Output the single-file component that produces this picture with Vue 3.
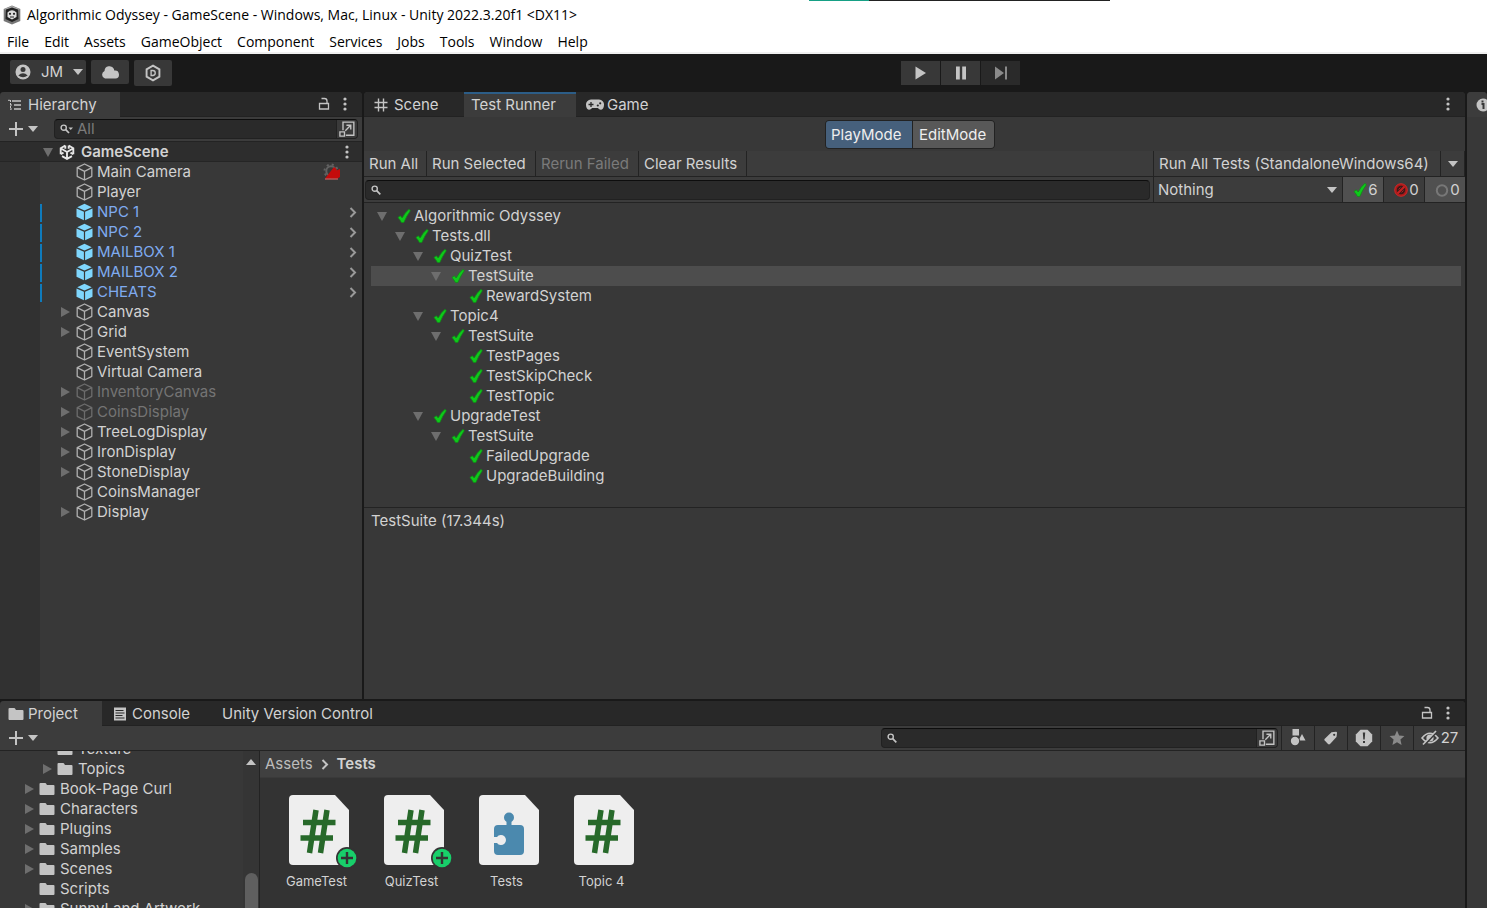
<script setup>
import { ref } from 'vue'

const menus = ['File', 'Edit', 'Assets', 'GameObject', 'Component', 'Services', 'Jobs', 'Tools', 'Window', 'Help']

const objects = [
  { name: 'Main Camera', camera: true },
  { name: 'Player' },
  { name: 'NPC 1', prefab: true },
  { name: 'NPC 2', prefab: true },
  { name: 'MAILBOX 1', prefab: true },
  { name: 'MAILBOX 2', prefab: true },
  { name: 'CHEATS', prefab: true },
  { name: 'Canvas', fold: true },
  { name: 'Grid', fold: true },
  { name: 'EventSystem' },
  { name: 'Virtual Camera' },
  { name: 'InventoryCanvas', fold: true, off: true },
  { name: 'CoinsDisplay', fold: true, off: true },
  { name: 'TreeLogDisplay', fold: true },
  { name: 'IronDisplay', fold: true },
  { name: 'StoneDisplay', fold: true },
  { name: 'CoinsManager' },
  { name: 'Display', fold: true },
]

const tests = [
  { name: 'Algorithmic Odyssey', depth: 0, fold: true },
  { name: 'Tests.dll', depth: 1, fold: true },
  { name: 'QuizTest', depth: 2, fold: true },
  { name: 'TestSuite', depth: 3, fold: true },
  { name: 'RewardSystem', depth: 4 },
  { name: 'Topic4', depth: 2, fold: true },
  { name: 'TestSuite', depth: 3, fold: true },
  { name: 'TestPages', depth: 4 },
  { name: 'TestSkipCheck', depth: 4 },
  { name: 'TestTopic', depth: 4 },
  { name: 'UpgradeTest', depth: 2, fold: true },
  { name: 'TestSuite', depth: 3, fold: true },
  { name: 'FailedUpgrade', depth: 4 },
  { name: 'UpgradeBuilding', depth: 4 },
]
const selected = ref(3)

const folders = [
  { name: 'Texture', depth: 1 },
  { name: 'Topics', depth: 1, fold: true },
  { name: 'Book-Page Curl', depth: 0, fold: true },
  { name: 'Characters', depth: 0, fold: true },
  { name: 'Plugins', depth: 0, fold: true },
  { name: 'Samples', depth: 0, fold: true },
  { name: 'Scenes', depth: 0, fold: true },
  { name: 'Scripts', depth: 0 },
  { name: 'SunnyLand Artwork', depth: 0, fold: true },
]

const assets = [
  { name: 'GameTest', icon: 'script', added: true },
  { name: 'QuizTest', icon: 'script', added: true },
  { name: 'Tests', icon: 'assembly' },
  { name: 'Topic 4', icon: 'script' },
]

const indent = (depth, step) => ({ paddingLeft: depth * step + 'px' })
</script>

<template>
  <svg class="defs" aria-hidden="true">
    <symbol id="i-down" viewBox="0 0 10 6"><path d="M0 0h10L5 6z" fill="currentColor" /></symbol>
    <symbol id="i-fold" viewBox="0 0 10 10"><path d="M1 0l9 5-9 5z" fill="currentColor" /></symbol>
    <symbol id="i-open" viewBox="0 0 10 10"><path d="M0 1h10L5 10z" fill="currentColor" /></symbol>
    <symbol id="i-next" viewBox="0 0 8 12"><path d="M1.5 2L6 6.500l-4.500 4.500" fill="none" stroke="currentColor" stroke-width="2" /></symbol>
    <symbol id="i-dots" viewBox="0 0 4 14"><g fill="currentColor"><circle cx="2" cy="2" r="1.600" /><circle cx="2" cy="7" r="1.600" /><circle cx="2" cy="12" r="1.600" /></g></symbol>
    <symbol id="i-lock" viewBox="0 0 12 14"><path d="M1.500 6.500h9V12h-9zM3.500 1.500h3Q9 1.500 9 4v2.500" fill="none" stroke="currentColor" stroke-width="1.300" /></symbol>
    <symbol id="i-plus" viewBox="0 0 16 16"><path d="M8 1v14M1 8h14" fill="none" stroke="currentColor" stroke-width="2" /></symbol>
    <symbol id="i-search" viewBox="0 0 10 10"><circle cx="3.700" cy="3.700" r="2.600" fill="none" stroke="currentColor" stroke-width="1.400" /><path d="M5.700 5.700L9.300 9.300" stroke="currentColor" stroke-width="1.700" /></symbol>
    <symbol id="i-searchmenu" viewBox="0 0 14 10"><circle cx="3.700" cy="3.700" r="2.600" fill="none" stroke="currentColor" stroke-width="1.400" /><path d="M5.700 5.700L9 9" stroke="currentColor" stroke-width="1.700" /><path d="M8.500 3.500h4.500L10.700 6z" fill="currentColor" /></symbol>
    <symbol id="i-popout" viewBox="0 0 14 14"><path d="M3.500 8V1h9.500v11.500H6M.800 9.500h4v3.700h-4zM5.500 8.500L10 4M6.500 3.700h3.800v3.800" fill="none" stroke="currentColor" stroke-width="1.200" /></symbol>
    <symbol id="i-cube" viewBox="0 0 18 18"><path d="M9.500 1l7.300 3.700v8.600L9.500 17l-7.300-3.700V4.700zM2.200 4.700l7.300 3.600 7.300-3.600M9.500 8.300V17" fill="none" stroke="currentColor" stroke-width="1.300" stroke-linejoin="round" /></symbol>
    <symbol id="i-prefab" viewBox="0 0 18 18"><path d="M9.500.700l7.300 3.500-7.300 3.300-7.300-3.300z" fill="#7fd6fd" /><path d="M1.500 5.400l7.400 3.300v8.600l-7.400-3.500zM17.500 5.400l-7.400 3.300v8.600l7.400-3.500z" fill="#7fd6fd" /></symbol>
    <symbol id="i-unity" viewBox="0 0 16 16"><path d="M8 8v6.500M8 8L2.500 4.800M8 8l5.500-3.200M6.300 1.500L1.700 4.200v6M9.700 1.500l4.600 2.700v6M3 12.200l5 2.700 5-2.700M6.300 1.500v3.200M9.700 1.500v3.200M1.700 10.200l2.800-1.600M14.300 10.200l-2.800-1.600" fill="none" stroke="currentColor" stroke-width="1.900" /></symbol>
    <symbol id="i-appicon" viewBox="0 0 18 20"><path d="M9 .500l8.300 3.500v12L9 19.500.700 16V4z" fill="#777" /><path d="M9 1l8 3.300L9 6 1 4.300z" fill="#aaa" /><path d="M3 4.500l6-2 6 2 .500 9.500L9 17l-6.500-3z" fill="#222" /><path d="M4.500 7.500Q9 3 13.500 7.500V12L9 14.500 4.500 12z" fill="#ddd" /><circle cx="7" cy="8.800" r="1.100" fill="#222" /><circle cx="11" cy="8.800" r="1.100" fill="#222" /><path d="M7 12h4" stroke="#444" stroke-width="1.200" /></symbol>
    <symbol id="i-tree" viewBox="0 0 14 12"><path d="M4 2h9M6 6h7M6 10h7" stroke="currentColor" stroke-width="1.300" /><path d="M0 1.300h2.500M2.500 1v9.500M2 6h2M2 10h2" fill="none" stroke="currentColor" stroke-width="1" stroke-dasharray="2 1" /></symbol>
    <symbol id="i-grid" viewBox="0 0 14 14"><path d="M4.500.500v13M9.500.500v13M.500 4.500h13M.500 9.500h13" stroke="currentColor" stroke-width="1.400" /></symbol>
    <symbol id="i-game" viewBox="0 0 18 11"><path d="M5 0h8a5 5 0 0 1 5 5.500c0 5-4 6-6 3H6C4 11.500 0 10.500 0 5.500A5 5 0 0 1 5 0z" fill="currentColor" /><path d="M2.500 5h5M5 2.500v5" stroke="#282828" stroke-width="1.300" /><circle cx="11.800" cy="6" r="1.100" fill="#282828" /><circle cx="14.200" cy="3.800" r="1.100" fill="#282828" /></symbol>
    <symbol id="i-folder" viewBox="0 0 16 13"><path d="M.500 1.500Q.500.500 1.500.500H6q1 0 1.400 1l.500 1H14.500q1 0 1 1V11.500q0 1-1 1h-13q-1 0-1-1z" fill="currentColor" /></symbol>
    <symbol id="i-console" viewBox="0 0 12 14"><path d="M0 .500h12v13H0z" fill="currentColor" /><path d="M1.500 3.500h8M1.500 6h9M1.500 8.500h7M1.500 11h9" stroke="#282828" stroke-width="1.200" /></symbol>
    <symbol id="i-check" viewBox="0 0 14 14"><path d="M1 8.500L3.300 6.800l1.900 2.200Q8 3.500 12 .300L13.300 1.800Q9.500 7 6.800 13.500H4.500Q2.800 10.500 1 8.500z" fill="#0ec91a" stroke="#128a18" stroke-width=".800" /></symbol>
    <symbol id="i-fail" viewBox="0 0 14 14"><circle cx="7" cy="7" r="5.400" fill="#3a1a1a" stroke="#a81818" stroke-width="2.400" /><circle cx="7" cy="7" r="6.300" fill="none" stroke="#d33" stroke-width=".700" /><path d="M3.500 10.500l7-7" stroke="#c32020" stroke-width="2.200" /><path d="M4.500 6.500l2-2M7.500 9.500l2-2" stroke="#a22" stroke-width="1" /></symbol>
    <symbol id="i-ring" viewBox="0 0 14 14"><circle cx="7" cy="7.500" r="5.200" fill="none" stroke="#777" stroke-width="2" /></symbol>
    <symbol id="i-camera" viewBox="0 0 20 18"><circle cx="9" cy="8" r="4.700" fill="none" stroke="#626262" stroke-width="2" /><circle cx="9" cy="8" r="6.500" fill="none" stroke="#626262" stroke-width="2" stroke-dasharray="2 3.100" /><path d="M12 4l2.500 2v1.500L18 6v8l-2.500 1.500H3z" fill="#c40b0b" /><path d="M3 16h13" stroke="#e66" stroke-width="1" /></symbol>
    <symbol id="i-user" viewBox="0 0 16 16"><circle cx="8" cy="8" r="7.500" fill="currentColor" /><circle cx="8" cy="5.500" r="2.500" fill="#383838" /><path d="M3.300 11.500Q8 7 12.700 11.500 8 15 3.300 11.500z" fill="#383838" /></symbol>
    <symbol id="i-cloud" viewBox="0 0 18 13"><path d="M4 13a4 4 0 0 1-.500-7.500A5 5 0 0 1 13 3.500q0 1 .300 1.500A4 4 0 0 1 14.500 13z" fill="currentColor" /></symbol>
    <symbol id="i-devops" viewBox="0 0 16 16"><path d="M8 1.500l5.700 3.300v6.400L8 14.500l-5.700-3.300V4.800z" fill="none" stroke="currentColor" stroke-width="1.700" /><path d="M6.300 5.800h1.400q2.300 0 2.300 2.200t-2.300 2.200H6.300z" fill="none" stroke="currentColor" stroke-width="1.200" /></symbol>
    <symbol id="i-play" viewBox="0 0 12 14"><path d="M.500.500L11 7 .500 13.500z" fill="currentColor" /></symbol>
    <symbol id="i-pause" viewBox="0 0 12 14"><path d="M1 .500h3.800v13H1zM7.200.500H11v13H7.200z" fill="currentColor" /></symbol>
    <symbol id="i-step" viewBox="0 0 14 14"><path d="M1 .500L10 7l-9 6.500zM11 .500h2v13h-2z" fill="currentColor" /></symbol>
    <symbol id="i-info" viewBox="0 0 16 16"><circle cx="8" cy="8" r="6.500" fill="currentColor" /><path d="M6.500 7h2v5M6.500 4.500h2" fill="none" stroke="#383838" stroke-width="2" /></symbol>
    <symbol id="i-shapes" viewBox="0 0 16 18"><path d="M2.500 0H9v6.500H2.500zM12 5l3.500 6.500H8.500z" fill="currentColor" /><circle cx="5" cy="12" r="5" fill="#383838" /><circle cx="5" cy="12" r="4.200" fill="currentColor" /></symbol>
    <symbol id="i-tag" viewBox="0 0 14 14"><path d="M.500 8L7.500 1.200 12 .800q1 0 1 1L12.500 6 6 13q-1 .800-2 0L.700 9.500Q0 8.500.500 8z" fill="currentColor" /><circle cx="10.200" cy="3.800" r="1.100" fill="#383838" /></symbol>
    <symbol id="i-alert" viewBox="0 0 18 18"><path d="M5.500.800h7l4.700 4.700v7l-4.700 4.700h-7L.800 12.500v-7z" fill="currentColor" /><path d="M7.800 3.500h2.400l-.500 7H8.300zM8 12h2v2H8z" fill="#383838" /></symbol>
    <symbol id="i-star" viewBox="0 0 14 14"><path d="M7 .500l1.900 4.300 4.600.500-3.500 3.100 1 4.800L7 10.800l-4 2.400 1-4.800L.500 5.300l4.600-.500z" fill="currentColor" /></symbol>
    <symbol id="i-hidden" viewBox="0 0 18 16"><path d="M1 8q8-9.500 16 0-8 9.500-16 0z" fill="none" stroke="currentColor" stroke-width="1.600" /><circle cx="9" cy="8" r="3.600" fill="currentColor" /><path d="M2.800 15.500L16 1.500" stroke="#383838" stroke-width="2" /><path d="M2 14.500L15 1" stroke="currentColor" stroke-width="1.700" /></symbol>
    <symbol id="i-script" viewBox="0 0 60 70"><path d="M4 0h42l14 15v51q0 4-4 4H4q-4 0-4-4V4q0-4 4-4z" fill="#eee" /><path d="M27 15L20.500 58M38 15L31.500 58M14 27.500h32.500M11.500 43H44" stroke="#27692a" stroke-width="5.500" /></symbol>
    <symbol id="i-assembly" viewBox="0 0 60 70"><path d="M4 0h42l14 15v51q0 4-4 4H4q-4 0-4-4V4q0-4 4-4z" fill="#eee" /><circle cx="30" cy="22.500" r="5" fill="#4b89ae" /><path d="M27.500 24h5v6h8.500q4 0 4 4v22q0 4-4 4H19q-4 0-4-4v-8h3a5 5 0 1 0 0-6h-3v-8q0-4 4-4h8.500z" fill="#4b89ae" /></symbol>
    <symbol id="i-added" viewBox="0 0 22 22"><circle cx="11" cy="11" r="11" fill="#333" /><circle cx="11" cy="11" r="9.300" fill="#18cf6a" /><path d="M11 5v12M5 11h12" stroke="#333" stroke-width="2.400" /></symbol>
  </svg>

  <div class="app">
    <header class="window">
      <div class="progress" aria-hidden="true"></div>
      <div class="title">
        <svg class="s20"><use href="#i-appicon" /></svg>
        <span>Algorithmic Odyssey - GameScene - Windows, Mac, Linux - Unity 2022.3.20f1 &lt;DX11&gt;</span>
      </div>
      <nav class="menus">
        <button v-for="m in menus" :key="m">{{ m }}</button>
      </nav>
    </header>

    <div class="mainbar">
      <div class="account">
        <button class="dark user"><svg class="s16"><use href="#i-user" /></svg><span>JM</span><svg class="arrow"><use href="#i-down" /></svg></button>
        <button class="dark" aria-label="Cloud"><svg class="s18"><use href="#i-cloud" /></svg></button>
        <button class="dark devops" aria-label="DevOps"><svg class="s18"><use href="#i-devops" /></svg></button>
      </div>
      <div class="playback">
        <button class="dark" aria-label="Play"><svg class="s14"><use href="#i-play" /></svg></button>
        <button class="dark" aria-label="Pause"><svg class="s14"><use href="#i-pause" /></svg></button>
        <button class="dark dim" aria-label="Step"><svg class="s14"><use href="#i-step" /></svg></button>
      </div>
    </div>

    <div class="body">
      <div class="docks">
        <div class="upper">
          <section class="panel hierarchy">
            <div class="tabs">
              <button class="tab on t-hier"><svg class="s14"><use href="#i-tree" /></svg>Hierarchy</button>
              <span class="grow"></span>
              <button class="bare" aria-label="Lock"><svg class="s14"><use href="#i-lock" /></svg></button>
              <button class="bare dots" aria-label="Hierarchy options"><svg class="s14"><use href="#i-dots" /></svg></button>
            </div>
            <div class="bar">
              <button class="bare add" aria-label="Create"><svg class="s16"><use href="#i-plus" /></svg><svg class="arrow"><use href="#i-down" /></svg></button>
              <label class="search grow">
                <svg class="s14"><use href="#i-searchmenu" /></svg>
                <input type="text" placeholder="All" aria-label="Search hierarchy" />
                <button class="pop" aria-label="Open search"><svg class="s16"><use href="#i-popout" /></svg></button>
              </label>
            </div>
            <div class="scene">
              <svg class="s10"><use href="#i-open" /></svg>
              <svg class="s16 unity"><use href="#i-unity" /></svg>
              <strong>GameScene</strong>
              <span class="grow"></span>
              <button class="bare" aria-label="Scene options"><svg class="s14"><use href="#i-dots" /></svg></button>
            </div>
            <ul class="objects">
              <li v-for="o in objects" :key="o.name" :class="{ prefab: o.prefab, off: o.off }">
                <span class="fold"><svg v-if="o.fold" class="s10"><use href="#i-fold" /></svg></span>
                <svg class="s18 cube"><use :href="o.prefab ? '#i-prefab' : '#i-cube'" /></svg>
                <span class="grow">{{ o.name }}</span>
                <svg v-if="o.camera" class="s20 cam"><use href="#i-camera" /></svg>
                <svg v-if="o.prefab" class="s12"><use href="#i-next" /></svg>
              </li>
            </ul>
          </section>

          <section class="panel runner">
            <div class="tabs">
              <button class="tab t-scene"><svg class="s14"><use href="#i-grid" /></svg>Scene</button>
              <button class="tab on focus t-test">Test Runner</button>
              <button class="tab t-game"><svg class="s18"><use href="#i-game" /></svg>Game</button>
              <span class="grow"></span>
              <button class="bare dots" aria-label="Test Runner options"><svg class="s14"><use href="#i-dots" /></svg></button>
            </div>
            <div class="modes">
              <div class="modegroup">
                <button class="active">PlayMode</button>
                <button>EditMode</button>
              </div>
            </div>
            <div class="row actions">
              <button class="w62">Run All</button>
              <button class="w108">Run Selected</button>
              <button class="w102" disabled>Rerun Failed</button>
              <button class="w107">Clear Results</button>
              <span class="grow"></span>
              <div class="side">
                <button class="grow">Run All Tests (StandaloneWindows64)</button>
                <button class="more" aria-label="Run options"><svg class="arrow"><use href="#i-down" /></svg></button>
              </div>
            </div>
            <div class="row filters">
              <div class="cell grow">
                <label class="search">
                  <svg class="s10"><use href="#i-search" /></svg>
                  <input type="text" aria-label="Search tests" />
                </label>
              </div>
              <div class="side">
                <label class="pick grow">
                  <select aria-label="Category"><option>Nothing</option></select>
                  <svg class="arrow"><use href="#i-down" /></svg>
                </label>
                <button class="count lit" aria-label="Passed 6"><svg class="s14"><use href="#i-check" /></svg>6</button>
                <button class="count" aria-label="Failed 0"><svg class="s14"><use href="#i-fail" /></svg>0</button>
                <button class="count lit" aria-label="Not run 0"><svg class="s14"><use href="#i-ring" /></svg>0</button>
              </div>
            </div>
            <ul class="tests">
              <li v-for="(t, i) in tests" :key="i" :class="{ sel: i === selected }" @click="selected = i">
                <span class="twig" :style="indent(t.depth, 18)"><svg v-if="t.fold" class="s10"><use href="#i-open" /></svg></span>
                <svg class="s14"><use href="#i-check" /></svg>
                <span>{{ t.name }}</span>
              </li>
            </ul>
            <p class="detail">TestSuite (17.344s)</p>
          </section>
        </div>

        <section class="panel project">
          <div class="tabs">
            <button class="tab on t-proj"><svg class="s16"><use href="#i-folder" /></svg>Project</button>
            <button class="tab t-cons"><svg class="s14"><use href="#i-console" /></svg>Console</button>
            <button class="tab t-uvc">Unity Version Control</button>
            <span class="grow"></span>
            <button class="bare" aria-label="Lock project"><svg class="s14"><use href="#i-lock" /></svg></button>
            <button class="bare dots" aria-label="Project options"><svg class="s14"><use href="#i-dots" /></svg></button>
          </div>
          <div class="bar">
            <button class="bare add" aria-label="Create asset"><svg class="s16"><use href="#i-plus" /></svg><svg class="arrow"><use href="#i-down" /></svg></button>
            <span class="grow"></span>
            <label class="search wide">
              <svg class="s10"><use href="#i-search" /></svg>
              <input type="text" aria-label="Search project" />
              <button class="pop" aria-label="Open asset search"><svg class="s16"><use href="#i-popout" /></svg></button>
            </label>
            <div class="tools">
              <button aria-label="Search by type"><svg class="s18"><use href="#i-shapes" /></svg></button>
              <button aria-label="Search by label"><svg class="s14"><use href="#i-tag" /></svg></button>
              <button aria-label="Search by log"><svg class="s18"><use href="#i-alert" /></svg></button>
              <button class="dim" aria-label="Favourite"><svg class="s16"><use href="#i-star" /></svg></button>
              <button class="hidden" aria-label="Hidden packages 27"><svg class="s18"><use href="#i-hidden" /></svg>27</button>
            </div>
          </div>
          <div class="browser">
            <div class="folders">
              <ul>
                <li v-for="f in folders" :key="f.name" :style="indent(f.depth, 18)">
                  <span class="fold"><svg v-if="f.fold" class="s10"><use href="#i-fold" /></svg></span>
                  <svg class="s16"><use href="#i-folder" /></svg>
                  <span>{{ f.name }}</span>
                </li>
              </ul>
              <div class="scroll" aria-hidden="true">
                <svg class="arrow up"><use href="#i-down" /></svg>
                <div class="thumb"></div>
              </div>
            </div>
            <div class="content">
              <nav class="crumbs">
                <a href="#">Assets</a><svg class="s12"><use href="#i-next" /></svg><strong>Tests</strong>
              </nav>
              <div class="assets">
                <figure v-for="a in assets" :key="a.name">
                  <div class="thumbnail">
                    <svg class="file"><use :href="'#i-' + a.icon" /></svg>
                    <svg v-if="a.added" class="badge"><use href="#i-added" /></svg>
                  </div>
                  <figcaption>{{ a.name }}</figcaption>
                </figure>
              </div>
            </div>
          </div>
        </section>
      </div>
      <aside class="panel inspector">
        <div class="tabs"><button class="tab on" aria-label="Inspector"><svg class="s16"><use href="#i-info" /></svg></button></div>
      </aside>
    </div>
  </div>
</template>

<style>
body { margin: 0; background: #191919; }
</style>

<style scoped>
* { box-sizing: border-box; }
.app {
  display: flex; flex-direction: column; height: 100vh; overflow: hidden;
  background: #191919; color: #d2d2d2;
  font-family: Inter, "Liberation Sans", sans-serif; font-size: 15px; line-height: 20px;
}
.defs { position: absolute; width: 0; height: 0; }
button, input, select { font: inherit; color: inherit; border: 0; border-radius: 0; padding: 0; margin: 0; background: none; }
button { display: flex; align-items: center; justify-content: center; white-space: nowrap; }
svg { flex: none; display: block; color: #c4c4c4; }
ul { list-style: none; margin: 0; padding: 0; }
li { display: flex; align-items: center; height: 20px; white-space: nowrap; }
.grow { flex: 1; min-width: 0; }
.s10 { width: 10px; height: 10px; }
.s12 { width: 12px; height: 12px; }
.s14 { width: 14px; height: 14px; }
.s16 { width: 16px; height: 16px; }
.s18 { width: 18px; height: 18px; }
.s20 { width: 20px; height: 20px; }
.arrow { width: 10px; height: 6px; }
.dim svg { color: #8a8a8a; }

.window {
  position: relative; background: #fff; color: #000; border-bottom: 2px solid #f0f0f0;
  font-family: "Open Sans", "Noto Sans", sans-serif; font-size: 14px;
}
.progress { position: absolute; top: 0; left: 809px; width: 301px; height: 1px; background: linear-gradient(90deg, #16a085 60px, #222 60px); }
.title { display: flex; align-items: center; gap: 5px; height: 29px; padding-left: 2px; white-space: nowrap; }
.menus { display: flex; gap: 15px; height: 23px; padding: 2px 7px 0; }

.mainbar { display: grid; grid-template-columns: 891fr 586fr; align-items: center; height: 38px; padding-left: 10px; }
.account { display: flex; gap: 5px; }
.dark { width: 38px; height: 24px; background: #383838; border-radius: 2px; }
.user { width: 76px; gap: 10px; padding-left: 2px; }
.devops { height: 26px; }
.playback { display: flex; gap: 1px; }
.playback .dark { width: 39px; border-radius: 0; }
.playback .dark.dim { background: #2a2a2a; }

.body { flex: 1; min-height: 0; display: flex; gap: 2px; }
.docks { flex: 1; min-width: 0; display: flex; flex-direction: column; gap: 2px; }
.upper { flex: 1; min-height: 0; display: flex; gap: 2px; }
.panel { display: flex; flex-direction: column; background: #383838; border-radius: 4px 4px 0 0; overflow: hidden; }
.hierarchy { width: 362px; }
.runner { flex: 1; min-width: 0; }
.project { height: 207px; }
.inspector { width: 20px; }

.tabs { display: flex; flex: none; height: 25px; background: #282828; border-bottom: 1px solid #222; }
.tab { justify-content: flex-start; height: 25px; gap: 5px; padding-left: 8px; }
.tab.on { background: #3c3c3c; }
.tab.focus { border-top: 2px solid #2c5d87; padding: 0 0 2px 7px; }
.t-hier { width: 120px; }
.t-scene { width: 100px; padding-left: 10px; gap: 6px; }
.t-test { width: 112px; }
.t-game { padding-left: 10px; gap: 3px; }
.t-hier { gap: 6px; }
.t-proj { width: 102px; gap: 4px; }
.t-cons { width: 112px; padding-left: 11px; }
.bare { width: 20px; }
.dots { width: 22px; margin-right: 6px; }

.bar { display: flex; flex: none; align-items: center; height: 25px; background: #3c3c3c; border-bottom: 1px solid #232323; }
.add { width: 30px; margin-left: 8px; gap: 4px; }
.search {
  display: flex; align-items: center; height: 20px; padding-left: 5px; gap: 3px;
  background: #2a2a2a; border: 1px solid #212121; border-top-color: #0d0d0d; border-radius: 4px; overflow: hidden;
}
.search input { flex: 1; min-width: 0; outline: 0; }
.search input::placeholder { color: #7b7b7b; opacity: 1; }
.hierarchy .search { margin: 0 4px 0 16px; }
.pop { width: 21px; height: 20px; background: #3a3a3a; border-left: 1px solid #212121; }
.wide { width: 397px; margin-right: 3px; }

.scene { display: flex; flex: none; align-items: center; height: 20px; padding: 0 5px 0 43px; background: #2d2d2d; border-bottom: 1px solid #252525; }
.scene .s10, .fold svg, .twig svg { color: #6e6e6e; }
.unity { margin: 0 6px; color: #e6e6e6; }
strong { font-weight: 600; }
.objects { flex: 1; background: linear-gradient(90deg, #313131 40px, transparent 40px); }
.objects li { padding: 0 3px 0 40px; }
.objects .fold { width: 14px; margin-left: 20px; }
.objects .cube { margin: 0 4px 0 1px; color: #b0b0b0; }
.objects .prefab { color: #7fabf0; background: linear-gradient(#0f7bbc, #0f7bbc) 40px 2px / 2px 18px no-repeat; }
.objects .prefab .s12 { color: #999; }
.objects .off { color: #747474; }
.objects .off .cube { color: #6c6c6c; }
.cam { margin-right: 17px; }

.modes { display: flex; justify-content: center; flex: none; height: 34px; padding: 3px 9px 2px 0; }
.modegroup { display: flex; border: 1px solid #222; border-radius: 4px; overflow: hidden; background: #222; gap: 1px; }
.modegroup button { width: 81px; background: #585858; color: #eee; justify-content: flex-start; padding-left: 6px; }
.modegroup .active { width: 86px; background: #46607c; padding-left: 5px; }
.row { display: flex; flex: none; height: 26px; background: #3c3c3c; border-bottom: 1px solid #232323; }
.actions button { border-right: 1px solid #232323; justify-content: flex-start; padding-left: 5px; }
.actions button:disabled { color: #7a7a7a; }
.w62 { width: 63px; }
.w108 { width: 109px; }
.w102 { width: 103px; }
.w107 { width: 108px; }
.side { display: flex; width: 312px; border-left: 1px solid #232323; }
.actions .more { width: 24px; justify-content: center; padding: 0; }
.cell { padding: 3px 3px 0 1px; }
.pick { display: grid; grid-template-columns: 1fr auto; align-items: center; padding-right: 5px; }
.pick select { grid-area: 1 / 1 / 2 / 3; height: 25px; padding-left: 4px; appearance: none; outline: 0; }
.pick .arrow { grid-area: 1 / 2; pointer-events: none; }
.count { width: 41px; border-left: 1px solid #232323; gap: 1px; padding-left: 5px; }
.count.lit { background: #505050; }
.tests { flex: none; padding: 3px 4px 21px 7px; border-bottom: 1px solid #232323; }
.tests li { padding-left: 6px; }
.tests .sel { background: #4d4d4d; }
.twig { display: flex; box-sizing: content-box; width: 20px; }
.tests li > svg { margin-right: 3px; }
.detail { margin: 0; padding: 3px 7px; }

.tools { display: flex; height: 24px; }
.tools button { width: 33px; border-left: 1px solid #232323; }
.tools .hidden { width: 52px; gap: 2px; }
.browser { flex: 1; min-height: 0; display: flex; }
.folders { display: flex; width: 260px; border-right: 1px solid #232323; overflow: hidden; }
.folders ul { flex: 1; min-width: 0; margin-top: -12px; }
.folders .fold { width: 15px; margin-left: 24px; }
.folders li > svg { margin-right: 5px; }
.scroll { display: flex; flex-direction: column; align-items: center; justify-content: space-between; width: 16px; background: #353535; }
.up { margin-top: 8px; transform: rotate(180deg); }
.thumb { width: 13px; height: 35px; border-radius: 7px 7px 0 0; background: #5f5f5f; }
.content { flex: 1; min-width: 0; background: #333; }
.crumbs { display: flex; align-items: center; gap: 6px; height: 27px; padding-left: 5px; background: #404040; border-bottom: 1px solid #3a3a3a; }
.crumbs a { color: #bcbcbc; text-decoration: none; }
.assets { display: flex; padding: 17px 9px; }
figure { width: 95px; margin: 0; text-align: center; font-size: 13px; }
.thumbnail { position: relative; width: 60px; height: 70px; margin: 0 auto 6px 20px; }
.file { width: 60px; height: 70px; }
.badge { position: absolute; right: -9px; bottom: -4px; width: 22px; height: 22px; }
</style>
